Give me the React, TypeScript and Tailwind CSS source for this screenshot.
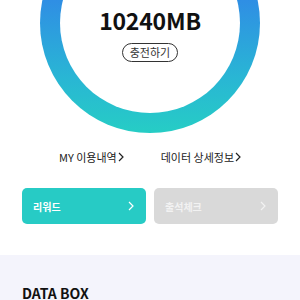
const Chevron = ({ className }: { className?: string }) => (
  <svg width="6" height="10" viewBox="0 0 6 10" className={className} fill="none">
    <polyline points="1,1 5,5 1,9" stroke="currentColor" strokeWidth="1.2" />
  </svg>
)

export default function App() {
  return (
    <div className="w-[300px] h-[300px] overflow-hidden bg-white" style={{ fontFamily: '"Noto Sans CJK KR", "Noto Sans", sans-serif' }}>
      <div className="mx-auto mt-[-87px] w-[220px] h-[220px] rounded-full p-[20px] bg-[linear-gradient(180deg,#2a78ea_0%,#2f8fe4_40%,#29b6d4_75%,#26cdc5_100%)]">
        <div className="w-full h-full rounded-full bg-white flex flex-col items-center pt-[72px]">
          <div className="text-[23px] leading-[30px] font-bold text-[#111] tracking-[-0.2px]">10240MB</div>
          <button className="mt-[8px] h-[19px] px-[7px] rounded-full border border-[#333] text-[11px] leading-[17px] text-[#333]">
            충전하기
          </button>
        </div>
      </div>

      <div className="mt-[16px] flex justify-center gap-[37px] text-[11px] leading-[16px] text-[#222]">
        <span className="flex items-center gap-[1px]">MY 이용내역<Chevron className="text-[#222]" /></span>
        <span className="flex items-center gap-[1px]">데이터 상세정보<Chevron className="text-[#222]" /></span>
      </div>

      <div className="mt-[23px] px-[22px] grid grid-cols-2 gap-[8px]">
        <div className="h-[36px] rounded-[5px] bg-[#27cbc5] flex items-center justify-between pl-[11px] pr-[12px] text-white">
          <span className="text-[10px] font-bold">리워드</span>
          <Chevron />
        </div>
        <div className="h-[36px] rounded-[5px] bg-[#d9d9d9] flex items-center justify-between pl-[11px] pr-[12px] text-[#f2f2f2]">
          <span className="text-[10px] font-bold">출석체크</span>
          <Chevron />
        </div>
      </div>

      <div className="mt-[31px] h-[60px] bg-[#f4f4fc] px-[22px] pt-[30px]">
        <div className="text-[14px] leading-[16px] font-bold text-[#111]">DATA BOX</div>
      </div>
    </div>
  )
}
